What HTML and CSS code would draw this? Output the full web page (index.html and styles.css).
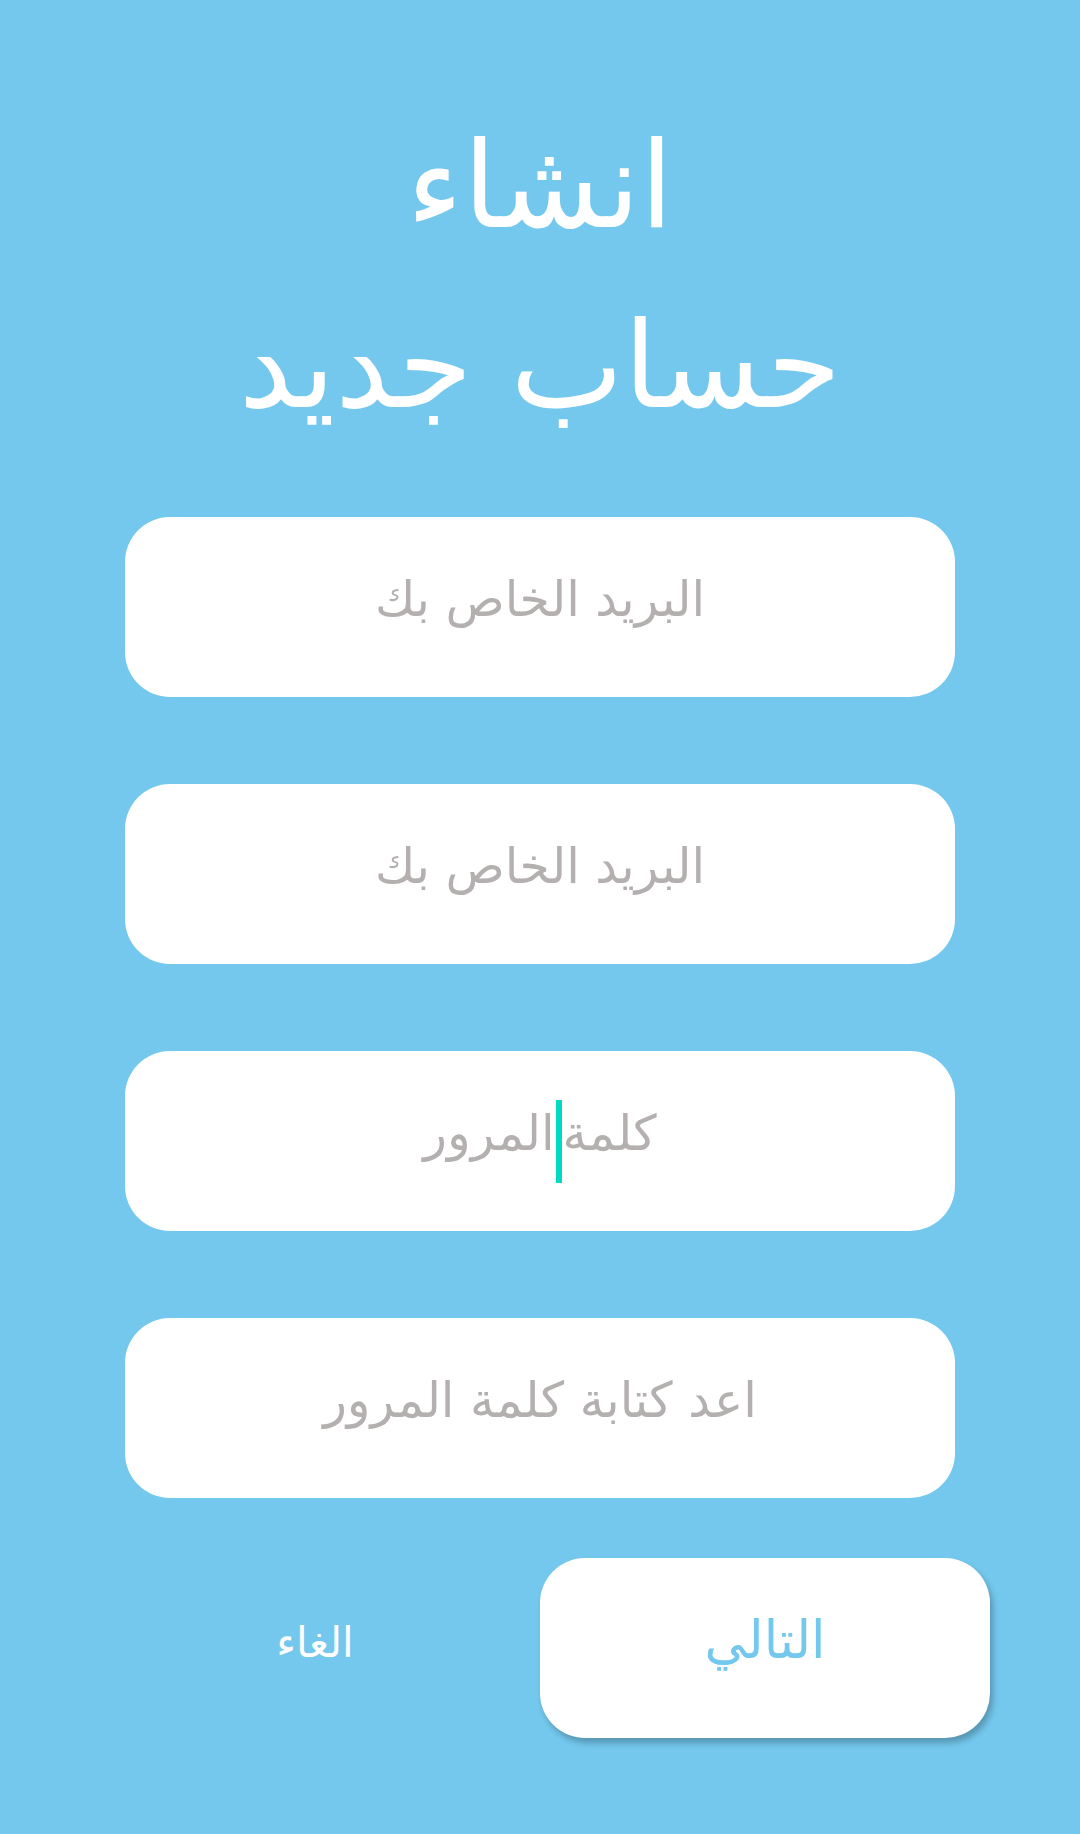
FILE: index.html
```html
<!DOCTYPE html>
<html lang="ar" dir="rtl">
<head>
<meta charset="utf-8">
<title>انشاء حساب جديد</title>
<link rel="stylesheet" href="styles.css">
</head>
<body>
<main class="screen">
  <header class="title">
    <h1 class="title-line">انشاء</h1>
    <h1 class="title-line">حساب جديد</h1>
  </header>
  <form class="form">
    <div class="field"><span class="placeholder">البريد الخاص بك</span></div>
    <div class="field"><span class="placeholder">البريد الخاص بك</span></div>
    <div class="field"><span class="placeholder">كلمة<span class="caret"></span>المرور</span></div>
    <div class="field"><span class="placeholder">اعد كتابة كلمة المرور</span></div>
  </form>
  <div class="actions">
    <div class="action-cell"><button class="next" type="button">التالي</button></div>
    <div class="action-cell"><button class="cancel" type="button">الغاء</button></div>
  </div>
</main>
</body>
</html>
```

FILE: styles.css
```css
html, body {
  margin: 0;
  padding: 0;
}
body {
  background: #74c8ee;
  font-family: "DejaVu Sans", sans-serif;
  width: 1080px;
  height: 1834px;
  overflow: hidden;
}
.screen {
  display: flex;
  flex-direction: column;
  align-items: center;
}
.title {
  display: flex;
  flex-direction: column;
  align-items: center;
  margin-top: 96px;
}
.title-line {
  margin: 0;
  color: #ffffff;
  font-weight: normal;
  font-size: 120px;
  line-height: 180px;
}
.form {
  display: flex;
  flex-direction: column;
  gap: 87px;
  width: 830px;
  margin-top: 61px;
}
.field {
  box-sizing: border-box;
  height: 180px;
  padding-bottom: 16px;
  background: #ffffff;
  border-radius: 45px;
  display: flex;
  align-items: center;
  justify-content: center;
}
.placeholder {
  color: #b5b0b0;
  font-size: 49px;
  display: inline-flex;
  align-items: center;
}
.caret {
  display: inline-block;
  width: 6px;
  height: 83px;
  margin: 16px 1px 0;
  background: #00d9c3;
}
.actions {
  display: flex;
  width: 900px;
  margin-top: 60px;
  align-self: flex-start;
  margin-right: 90px;
}
.action-cell {
  flex: 1;
  display: flex;
  align-items: center;
  justify-content: center;
}
.next {
  box-sizing: border-box;
  width: 450px;
  height: 180px;
  padding: 0 0 16px;
  border: none;
  border-radius: 45px;
  background: #ffffff;
  color: #74c8ee;
  font-family: inherit;
  font-size: 52px;
  box-shadow: 3px 5px 6px rgba(0, 0, 0, 0.25);
}
.cancel {
  border: none;
  background: transparent;
  color: #ffffff;
  font-family: inherit;
  font-size: 42px;
  padding: 0 0 12px;
}
```
